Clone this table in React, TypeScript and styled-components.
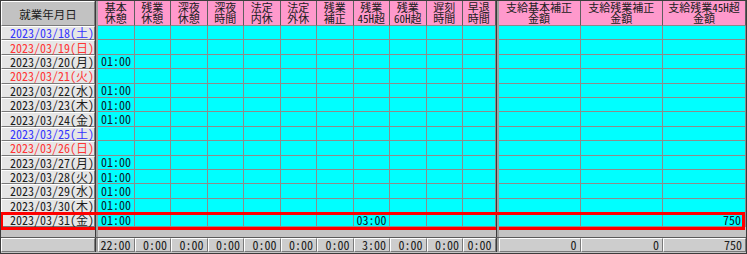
import React from 'react';
import styled, { createGlobalStyle, css } from 'styled-components';

const GlobalStyle = createGlobalStyle`
  html, body {
    margin: 0;
    padding: 0;
    background: #c0c0c0;
  }
  body {
    font-family: "Noto Sans CJK JP", "Noto Sans", sans-serif;
    font-feature-settings: "hwid";
  }
`;

const TIME_W = [36.5, 36.5, 36.5, 36.5, 36.5, 36.5, 36.5, 36.5, 36.5, 36.5, 32.5];
const AMOUNT_W = [82, 82.5, 83];
const DATE_W = 94;
const ROW_H = 14.4;

type DayKind = 'sat' | 'sun' | 'week';

const dayColors: Record<DayKind, string> = {
  sat: '#3535ff',
  sun: '#ff3535',
  week: '#1c1c1c',
};

const Grid = styled.div`
  width: 747px;
  height: 254px;
  box-sizing: border-box;
  border: 1px solid #3c3c3c;
  background: #c4c4c4;
  display: flex;
  flex-direction: column;
  overflow: hidden;
`;

const Row = styled.div<{ $h: number; $selected?: boolean }>`
  display: flex;
  flex: none;
  height: ${({ $h }) => $h}px;
  position: relative;
  ${({ $selected }) =>
    $selected &&
    css`
      &::after {
        content: '';
        position: absolute;
        left: -1px;
        right: 1px;
        top: -1px;
        bottom: -3px;
        border: 3px solid #ff0000;
        pointer-events: none;
      }
    `}
`;

const Splitter = styled.div`
  flex: none;
  width: 3px;
  box-sizing: border-box;
  border-left: 1px solid #3a3a3a;
  background: #a0a0a0;
`;

const Spacer = styled.div<{ $w: number }>`
  flex: none;
  width: ${({ $w }) => $w}px;
`;

const bevel = css`
  box-sizing: border-box;
  border-top: 1px solid #ffffff;
  border-left: 1px solid #ffffff;
  border-right: 1px solid #7a7a7a;
  border-bottom: 1px solid #7a7a7a;
`;

const DateHeader = styled.div`
  ${bevel};
  flex: none;
  width: ${DATE_W}px;
  background: #c2c2c2;
  display: flex;
  align-items: center;
  justify-content: center;
  font-size: 11.5px;
  line-height: 12px;
  color: #202020;
`;

const ColHeader = styled.div<{ $w: number }>`
  flex: none;
  width: ${({ $w }) => $w}px;
  box-sizing: border-box;
  background: #ff99cc;
  border-right: 1px solid #5e5e5e;
  border-bottom: 1px solid #8a8a8a;
  display: flex;
  flex-direction: column;
  align-items: center;
  justify-content: center;
  font-size: 11px;
  line-height: 11.5px;
  color: #202020;
  white-space: nowrap;
`;

const HeaderLine = styled.span`
  display: block;
  height: 11.5px;
`;

const DateCell = styled.div<{ $kind: DayKind }>`
  ${bevel};
  flex: none;
  width: ${DATE_W}px;
  background: #e6e6e6;
  color: ${({ $kind }) => dayColors[$kind]};
  font-size: 12px;
  line-height: 12px;
  padding-left: 8px;
  display: flex;
  align-items: center;
  white-space: nowrap;
`;

const DataCell = styled.div<{ $w: number; $right?: boolean }>`
  flex: none;
  width: ${({ $w }) => $w}px;
  box-sizing: border-box;
  background: #00ffff;
  border-right: 1px solid #8c8c8c;
  border-bottom: 1px solid #8c8c8c;
  color: #0c1c2c;
  font-size: 12px;
  line-height: 12px;
  display: flex;
  align-items: center;
  justify-content: ${({ $right }) => ($right ? 'flex-end' : 'flex-start')};
  padding: ${({ $right }) => ($right ? '0 4px 0 0' : '0 0 0 3px')};
  white-space: nowrap;
`;

const TotalsRow = styled(Row)`
  border-top: 1px solid #5a5a5a;
  box-sizing: border-box;
`;

const TotalCell = styled.div<{ $w: number }>`
  ${bevel};
  flex: none;
  width: ${({ $w }) => $w}px;
  background: #cdcdcd;
  color: #202020;
  font-size: 12px;
  line-height: 12px;
  display: flex;
  align-items: center;
  justify-content: flex-end;
  padding-right: 3px;
  white-space: nowrap;
`;

const timeHeaders = [
  ['基本', '休憩'],
  ['残業', '休憩'],
  ['深夜', '休憩'],
  ['深夜', '時間'],
  ['法定', '内休'],
  ['法定', '外休'],
  ['残業', '補正'],
  ['残業', '45H超'],
  ['残業', '60H超'],
  ['遅刻', '時間'],
  ['早退', '時間'],
];

const amountHeaders = [
  ['支給基本補正', '金額'],
  ['支給残業補正', '金額'],
  ['支給残業45H超', '金額'],
];

type DayRow = {
  date: string;
  kind: DayKind;
  times: Record<number, string>;
  amounts: Record<number, string>;
};

const base = (date: string, kind: DayKind, work: boolean): DayRow => ({
  date,
  kind,
  times: work ? { 0: '01:00' } : {},
  amounts: {},
});

const days: DayRow[] = [
  base('2023/03/18(土)', 'sat', false),
  base('2023/03/19(日)', 'sun', false),
  base('2023/03/20(月)', 'week', true),
  base('2023/03/21(火)', 'sun', false),
  base('2023/03/22(水)', 'week', true),
  base('2023/03/23(木)', 'week', true),
  base('2023/03/24(金)', 'week', true),
  base('2023/03/25(土)', 'sat', false),
  base('2023/03/26(日)', 'sun', false),
  base('2023/03/27(月)', 'week', true),
  base('2023/03/28(火)', 'week', true),
  base('2023/03/29(水)', 'week', true),
  base('2023/03/30(木)', 'week', true),
  {
    date: '2023/03/31(金)',
    kind: 'week',
    times: { 0: '01:00', 7: '03:00' },
    amounts: { 2: '750' },
  },
];

const timeTotals = ['22:00', '0:00', '0:00', '0:00', '0:00', '0:00', '0:00', '3:00', '0:00', '0:00', '0:00'];
const amountTotals = ['0', '0', '750'];

export default function App() {
  const timeSum = TIME_W.reduce((a, b) => a + b, 0);
  const amountSum = AMOUNT_W.reduce((a, b) => a + b, 0);

  return (
    <>
      <GlobalStyle />
      <Grid>
        <Row $h={25}>
          <DateHeader>就業年月日</DateHeader>
          <Splitter />
          {timeHeaders.map((h, i) => (
            <ColHeader key={i} $w={TIME_W[i]}>
              <HeaderLine>{h[0]}</HeaderLine>
              <HeaderLine>{h[1]}</HeaderLine>
            </ColHeader>
          ))}
          <Splitter />
          {amountHeaders.map((h, i) => (
            <ColHeader key={i} $w={AMOUNT_W[i]}>
              <HeaderLine>{h[0]}</HeaderLine>
              <HeaderLine>{h[1]}</HeaderLine>
            </ColHeader>
          ))}
        </Row>

        {days.map((d, r) => (
          <Row key={d.date} $h={ROW_H} $selected={r === days.length - 1}>
            <DateCell $kind={d.kind}>{d.date}</DateCell>
            <Splitter />
            {TIME_W.map((w, i) => (
              <DataCell key={i} $w={w}>
                {d.times[i] ?? ''}
              </DataCell>
            ))}
            <Splitter />
            {AMOUNT_W.map((w, i) => (
              <DataCell key={i} $w={w} $right>
                {d.amounts[i] ?? ''}
              </DataCell>
            ))}
          </Row>
        ))}

        <Row $h={10}>
          <Spacer $w={DATE_W} />
          <Splitter />
          <Spacer $w={timeSum} />
          <Splitter />
          <Spacer $w={amountSum} />
        </Row>

        <TotalsRow $h={15}>
          <TotalCell $w={DATE_W} />
          <Splitter />
          {timeTotals.map((t, i) => (
            <TotalCell key={i} $w={TIME_W[i]}>
              {t}
            </TotalCell>
          ))}
          <Splitter />
          {amountTotals.map((t, i) => (
            <TotalCell key={i} $w={AMOUNT_W[i]}>
              {t}
            </TotalCell>
          ))}
        </TotalsRow>
      </Grid>
    </>
  );
}
